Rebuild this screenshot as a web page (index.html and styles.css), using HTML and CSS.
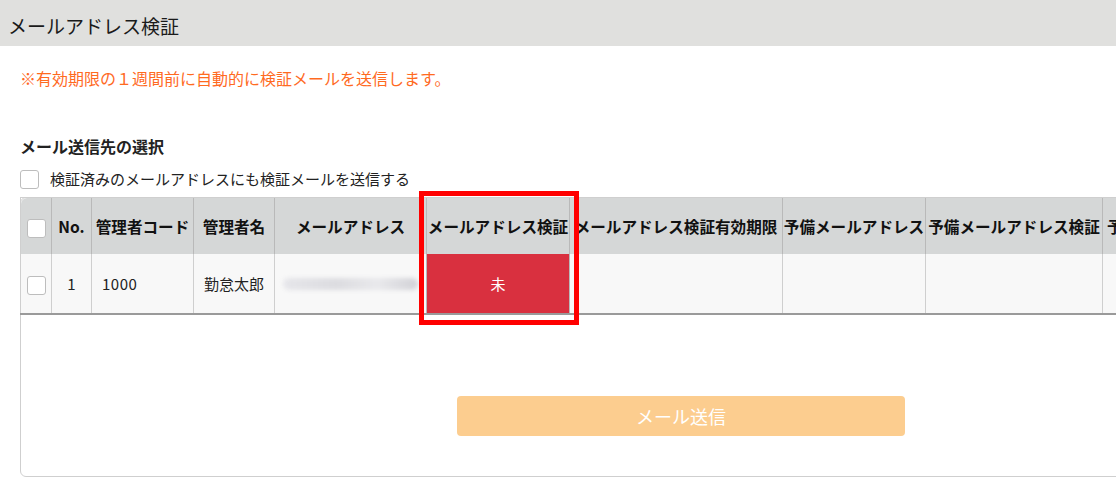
FILE: index.html
```html
<!DOCTYPE html>
<html lang="ja">
<head>
<meta charset="utf-8">
<link rel="stylesheet" href="styles.css">
</head>
<body>
<div class="titlebar">メールアドレス検証</div>
<div class="content">
  <p class="note">※有効期限の１週間前に自動的に検証メールを送信します。</p>
  <h2 class="section">メール送信先の選択</h2>
  <label class="check-row"><span class="cb"></span>検証済みのメールアドレスにも検証メールを送信する</label>
  <div class="panel">
    <table class="grid">
      <colgroup>
        <col style="width:31px"><col style="width:40px"><col style="width:102px"><col style="width:81px"><col style="width:152px"><col style="width:143px"><col style="width:213px"><col style="width:143px"><col style="width:177px"><col style="width:240px">
      </colgroup>
      <thead>
        <tr>
          <th><span class="cb"></span></th>
          <th>No.</th>
          <th>管理者コード</th>
          <th>管理者名</th>
          <th>メールアドレス</th>
          <th>メールアドレス検証</th>
          <th>メールアドレス検証有効期限</th>
          <th>予備メールアドレス</th>
          <th>予備メールアドレス検証</th>
          <th class="left">予備メールアドレス検証有効期限</th>
        </tr>
      </thead>
      <tbody>
        <tr>
          <td><span class="cb"></span></td>
          <td>1</td>
          <td class="left">1000</td>
          <td>勤怠太郎</td>
          <td class="left"><span class="blur"></span></td>
          <td class="ng">未</td>
          <td></td>
          <td></td>
          <td></td>
          <td></td>
        </tr>
      </tbody>
    </table>
    <div class="actions"><button class="send">メール送信</button></div>
    <div class="highlight"></div>
  </div>
</div>
</body>
</html>
```
FILE: styles.css
```css
html, body {
  margin: 0;
  padding: 0;
  overflow: hidden;
  background: #fff;
}
body {
  font-family: "Noto Sans CJK JP", "Noto Sans", sans-serif;
  color: #222;
  width: 1116px;
}
.titlebar {
  height: 46px;
  background: #e0e0de;
  font-size: 19px;
  line-height: 52px;
  padding-left: 8px;
  color: #1a1a1a;
}
.content {
  padding: 0 0 0 20px;
}
.note {
  margin: 0;
  padding-top: 20px;
  font-size: 16px;
  line-height: 24px;
  color: #ff6a1f;
}
.section {
  margin: 45px 0 0;
  font-size: 16px;
  font-weight: bold;
  line-height: 22px;
}
.check-row {
  display: flex;
  align-items: center;
  gap: 11px;
  margin-top: 10px;
  font-size: 15px;
  line-height: 24px;
  color: #222;
}
.cb {
  display: inline-block;
  width: 17px;
  height: 17px;
  border: 1px solid #bdbdbd;
  border-radius: 3px;
  background: #fff;
  vertical-align: middle;
}
.panel {
  position: relative;
  margin-top: 6px;
  width: 1322px;
  height: 280px;
  border: 1px solid #cfcfcf;
  border-radius: 6px;
  box-sizing: border-box;
}
.grid {
  table-layout: fixed;
  border-collapse: collapse;
  width: 1322px;
  margin-left: -1px;
  margin-top: -1px;
}
.grid th {
  background: #d5d7d7;
  height: 56px;
  font-size: 15.6px;
  font-weight: bold;
  color: #111;
  border-left: 1px solid #b9b9b9;
  border-top: 1px solid #cfcfcf;
  padding: 0;
  white-space: nowrap;
  text-align: center;
  overflow: hidden;
}
.grid th:first-child {
  border-top-left-radius: 6px;
}
.grid th.left {
  text-align: left;
  padding-left: 4px;
}
.grid td {
  background: #f8f8f8;
  height: 59px;
  font-size: 15px;
  color: #222;
  text-align: center;
  border-left: 1px solid #cfcfcf;
  border-bottom: 2px solid #9a9a9a;
  padding: 0;
}
.grid th:first-child, .grid td:first-child {
  border-left: 1px solid #cfcfcf;
}
.grid td.left {
  text-align: left;
  padding-left: 10px;
  letter-spacing: 0.5px;
}
.grid td.ng {
  background: #d9303f;
  color: #fff;
  border-left: 1px solid #b9b9b9;
}
.grid td:nth-child(7) {
  border-left: 1px solid #b9b9b9;
}
.blur {
  display: block;
  width: 135px;
  height: 12px;
  margin-left: -2px;
  border-radius: 6px;
  background: linear-gradient(90deg, #e6e6ea 0%, #dcdce0 40%, #e9e9ec 70%, #d2d2d7 100%);
  filter: blur(2px);
}
.actions {
  display: flex;
  justify-content: center;
  padding-top: 81px;
}
.send {
  width: 448px;
  height: 40px;
  border: none;
  border-radius: 4px;
  background: #fccd8f;
  color: #fff;
  font-family: "Noto Sans CJK JP", "Noto Sans", sans-serif;
  font-size: 18px;
  line-height: 40px;
  padding: 0;
}
.highlight {
  position: absolute;
  left: 398px;
  top: -7px;
  width: 160px;
  height: 134px;
  border: 5px solid #ff0000;
  box-sizing: border-box;
}
```
